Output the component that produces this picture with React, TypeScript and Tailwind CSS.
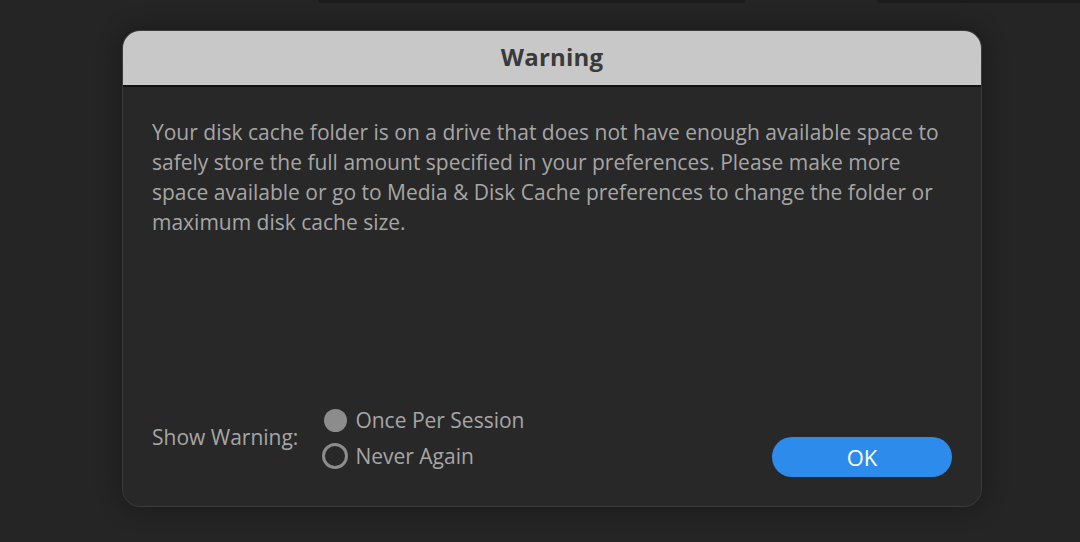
import React from "react";

export default function App() {
  return (
    <div className="relative h-[542px] w-[1080px] overflow-hidden bg-[#252525] font-['Open_Sans','Noto_Sans',sans-serif]">
      {/* panels peeking at the top edge */}
      <div className="absolute left-[318px] top-0 h-[3px] w-[427px] rounded-b-[3px] bg-[#1c1c1c]" />
      <div className="absolute left-[877px] top-0 h-[3px] w-[203px] rounded-bl-[3px] bg-[#1c1c1c]" />

      <div className="pt-[30px] pl-[122px]">
        <div className="flex h-[477px] w-[860px] flex-col overflow-hidden rounded-[18px] border border-[#3c3c3c] bg-[#282828] shadow-[0_0_24px_rgba(0,0,0,0.35)]">
          <div className="flex h-[56px] shrink-0 items-center justify-center border-b-2 border-[#111] bg-[#c8c8c8]">
            <span className="-mt-[3px] text-[24px] font-bold tracking-[0.2px] text-[#3a3a3a]">Warning</span>
          </div>

          <div className="flex flex-1 flex-col px-[29px] pt-[30px] pb-[28px]">
            <p className="whitespace-nowrap text-[21px] leading-[30px] text-[#a6a6a6]">
              Your disk cache folder is on a drive that does not have enough available space to
              <br />
              safely store the full amount specified in your preferences. Please make more
              <br />
              space available or go to Media &amp; Disk Cache preferences to change the folder or
              <br />
              maximum disk cache size.
            </p>

            <div className="mt-auto flex items-end justify-between">
              <div className="mb-[9px] flex items-center gap-[24px]">
                <span className="text-[21px] text-[#a6a6a6]">Show Warning:</span>
                <div className="flex flex-col gap-[10px]">
                  <label className="flex items-center gap-[8px] text-[21px] leading-[26px] text-[#a6a6a6]">
                    <span className="ml-[2px] h-[23px] w-[23px] rounded-full bg-[#8c8c8c]" />
                    Once Per Session
                  </label>
                  <label className="flex items-center gap-[7px] text-[21px] leading-[26px] text-[#a6a6a6]">
                    <span className="h-[26px] w-[26px] rounded-full border-[3px] border-[#8c8c8c]" />
                    Never Again
                  </label>
                </div>
              </div>
              <button
                type="button"
                className="mb-[1px] flex h-[40px] w-[180px] items-center justify-center rounded-full bg-[#2d8ceb] text-[22px] text-white"
              >
                OK
              </button>
            </div>
          </div>
        </div>
      </div>
    </div>
  );
}
